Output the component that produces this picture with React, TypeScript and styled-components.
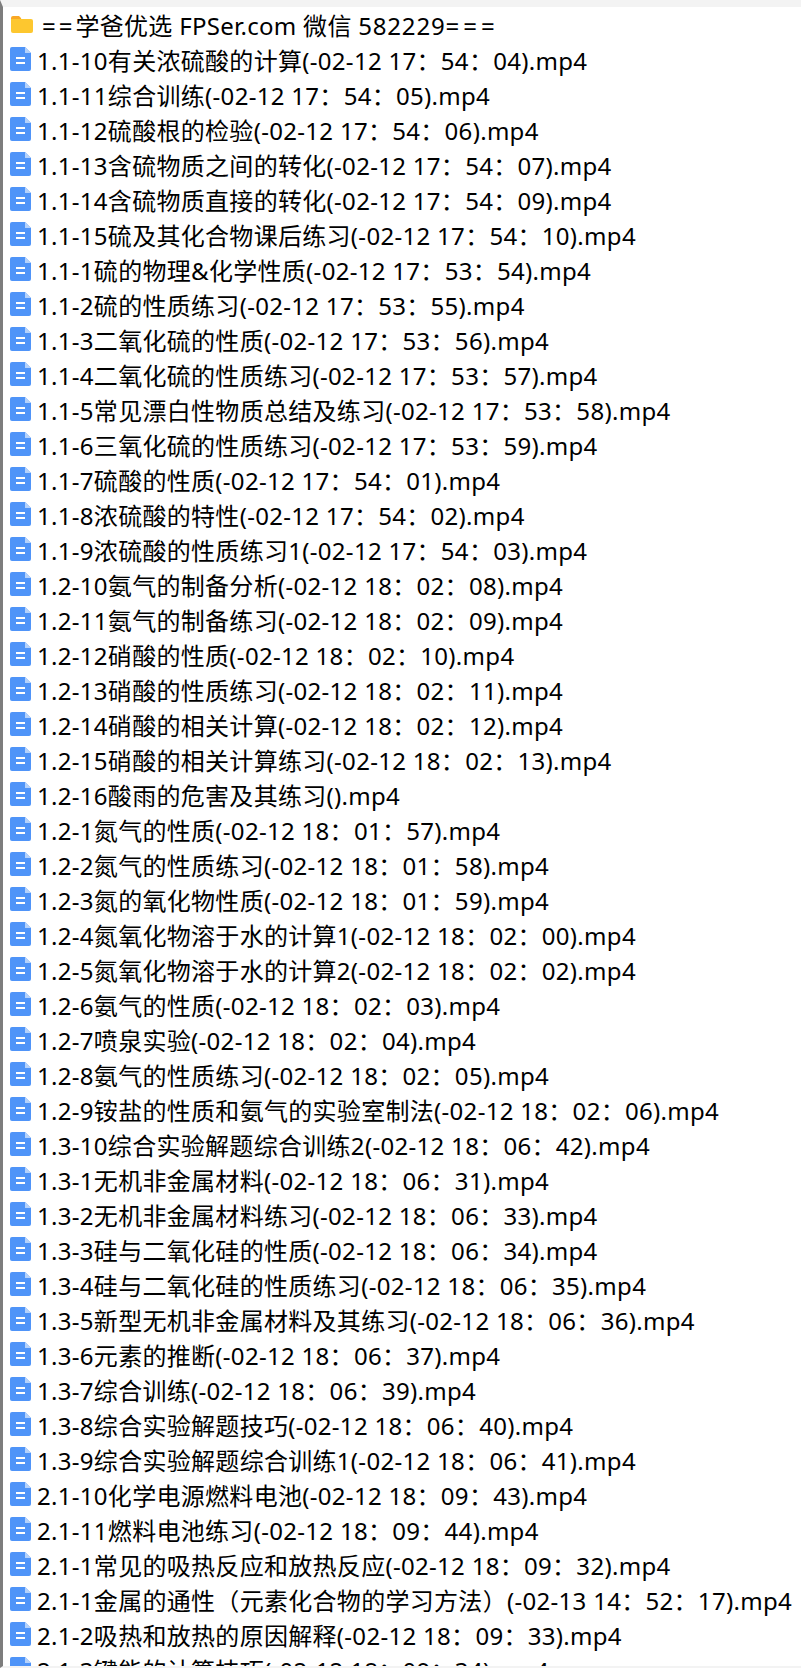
import React from 'react';
import styled, { createGlobalStyle } from 'styled-components';

const GlobalStyle = createGlobalStyle`
    html, body {
        margin: 0;
        padding: 0;
        background: #fff;
    }
`;

const Window = styled.div`
    width: 801px;
    height: 1668px;
    overflow: hidden;
    box-sizing: border-box;
    border-top: 7px solid #f3f3f3;
    border-left: 3px solid #7d7d7d;
    border-bottom: 2px solid #f3f3f3;
    background: #fff;
    font-family: 'Noto Sans', 'Noto Sans CJK SC', sans-serif;
    color: #000;
`;

const List = styled.div`
    display: flex;
    flex-direction: column;
`;

const Row = styled.div<{ $folder?: boolean }>`
    display: flex;
    align-items: center;
    height: 35px;
    flex-shrink: 0;
    padding-left: ${props => (props.$folder ? '8px' : '7px')};
    gap: ${props => (props.$folder ? '9px' : '6px')};
    font-size: 24px;
    letter-spacing: 0.3px;
    white-space: pre;
`;

const Equals = styled.span<{ $spacing: number }>`
    letter-spacing: ${props => props.$spacing}px;
`;

const Digits = styled.span`
    letter-spacing: 0.8px;
`;

const Icon = styled.svg`
    flex-shrink: 0;
    margin-bottom: 1px;
`;

const FolderIcon = () => (
    <Icon width="22" height="17" viewBox="0 0 22 17">
        <path d="M2 0h6l2.5 2.5H10V4H0V2a2 2 0 0 1 2-2z" fill="#f9a825" />
        <path d="M0 3h20a2 2 0 0 1 2 2v10a2 2 0 0 1-2 2H2a2 2 0 0 1-2-2z" fill="#fdc72f" />
    </Icon>
);

const FileIcon = () => (
    <Icon width="21" height="24" viewBox="0 0 21 24">
        <path d="M2 0h13l6 6v16a2 2 0 0 1-2 2H2a2 2 0 0 1-2-2V2a2 2 0 0 1 2-2z" fill="#4f94f8" />
        <path d="M15 0l6 6h-6z" fill="#b5d2fb" />
        <rect x="6" y="10" width="9" height="2" fill="#fff" />
        <rect x="6" y="15" width="9" height="2" fill="#fff" />
    </Icon>
);

const files = [
    '1.1-10有关浓硫酸的计算(-02-12 17：54：04).mp4',
    '1.1-11综合训练(-02-12 17：54：05).mp4',
    '1.1-12硫酸根的检验(-02-12 17：54：06).mp4',
    '1.1-13含硫物质之间的转化(-02-12 17：54：07).mp4',
    '1.1-14含硫物质直接的转化(-02-12 17：54：09).mp4',
    '1.1-15硫及其化合物课后练习(-02-12 17：54：10).mp4',
    '1.1-1硫的物理&化学性质(-02-12 17：53：54).mp4',
    '1.1-2硫的性质练习(-02-12 17：53：55).mp4',
    '1.1-3二氧化硫的性质(-02-12 17：53：56).mp4',
    '1.1-4二氧化硫的性质练习(-02-12 17：53：57).mp4',
    '1.1-5常见漂白性物质总结及练习(-02-12 17：53：58).mp4',
    '1.1-6三氧化硫的性质练习(-02-12 17：53：59).mp4',
    '1.1-7硫酸的性质(-02-12 17：54：01).mp4',
    '1.1-8浓硫酸的特性(-02-12 17：54：02).mp4',
    '1.1-9浓硫酸的性质练习1(-02-12 17：54：03).mp4',
    '1.2-10氨气的制备分析(-02-12 18：02：08).mp4',
    '1.2-11氨气的制备练习(-02-12 18：02：09).mp4',
    '1.2-12硝酸的性质(-02-12 18：02：10).mp4',
    '1.2-13硝酸的性质练习(-02-12 18：02：11).mp4',
    '1.2-14硝酸的相关计算(-02-12 18：02：12).mp4',
    '1.2-15硝酸的相关计算练习(-02-12 18：02：13).mp4',
    '1.2-16酸雨的危害及其练习().mp4',
    '1.2-1氮气的性质(-02-12 18：01：57).mp4',
    '1.2-2氮气的性质练习(-02-12 18：01：58).mp4',
    '1.2-3氮的氧化物性质(-02-12 18：01：59).mp4',
    '1.2-4氮氧化物溶于水的计算1(-02-12 18：02：00).mp4',
    '1.2-5氮氧化物溶于水的计算2(-02-12 18：02：02).mp4',
    '1.2-6氨气的性质(-02-12 18：02：03).mp4',
    '1.2-7喷泉实验(-02-12 18：02：04).mp4',
    '1.2-8氨气的性质练习(-02-12 18：02：05).mp4',
    '1.2-9铵盐的性质和氨气的实验室制法(-02-12 18：02：06).mp4',
    '1.3-10综合实验解题综合训练2(-02-12 18：06：42).mp4',
    '1.3-1无机非金属材料(-02-12 18：06：31).mp4',
    '1.3-2无机非金属材料练习(-02-12 18：06：33).mp4',
    '1.3-3硅与二氧化硅的性质(-02-12 18：06：34).mp4',
    '1.3-4硅与二氧化硅的性质练习(-02-12 18：06：35).mp4',
    '1.3-5新型无机非金属材料及其练习(-02-12 18：06：36).mp4',
    '1.3-6元素的推断(-02-12 18：06：37).mp4',
    '1.3-7综合训练(-02-12 18：06：39).mp4',
    '1.3-8综合实验解题技巧(-02-12 18：06：40).mp4',
    '1.3-9综合实验解题综合训练1(-02-12 18：06：41).mp4',
    '2.1-10化学电源燃料电池(-02-12 18：09：43).mp4',
    '2.1-11燃料电池练习(-02-12 18：09：44).mp4',
    '2.1-1常见的吸热反应和放热反应(-02-12 18：09：32).mp4',
    '2.1-1金属的通性（元素化合物的学习方法）(-02-13 14：52：17).mp4',
    '2.1-2吸热和放热的原因解释(-02-12 18：09：33).mp4',
    '2.1-3键能的计算技巧(-02-12 18：09：34).mp4',
];

const App = () => (
    <>
        <GlobalStyle />
        <Window>
            <List>
                <Row $folder>
                    <FolderIcon />
                    <span>
                        <Equals $spacing={3}>==</Equals>学爸优选 FPSer.com 微信 <Digits>582229</Digits>
                        <Equals $spacing={4}>===</Equals>
                    </span>
                </Row>
                {files.map(name => (
                    <Row key={name}>
                        <FileIcon />
                        {name}
                    </Row>
                ))}
            </List>
        </Window>
    </>
);

export default App;
